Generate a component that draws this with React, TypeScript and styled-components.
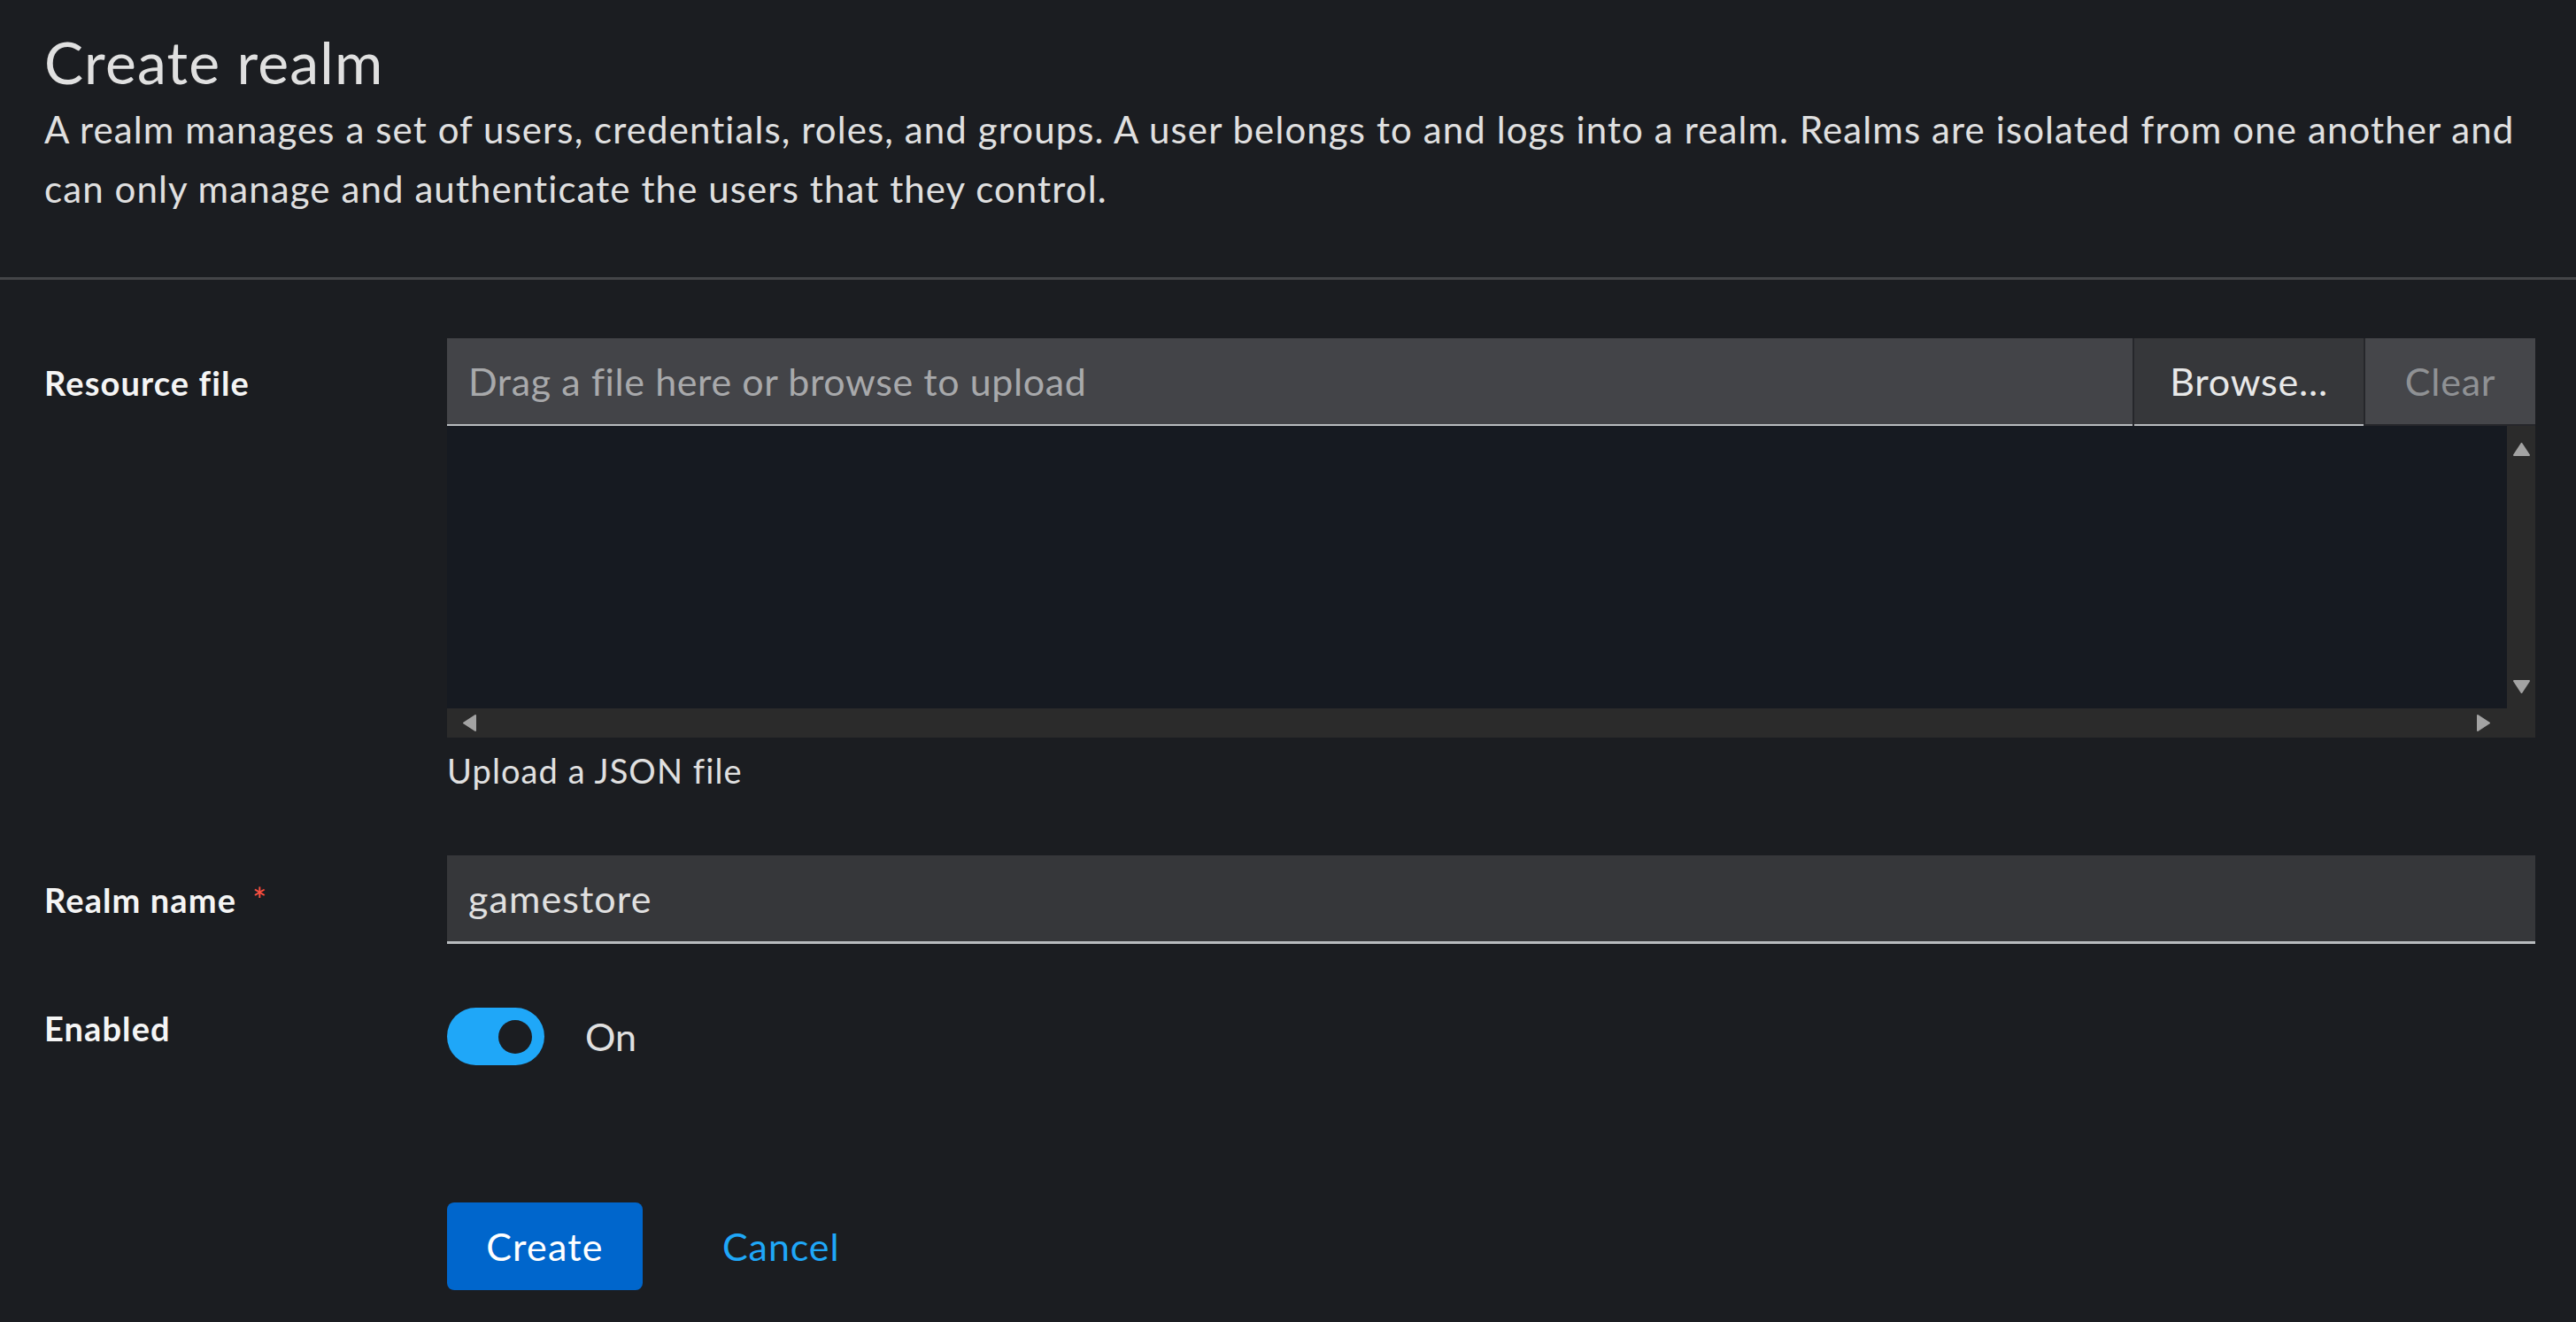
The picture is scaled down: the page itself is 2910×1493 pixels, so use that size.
import React from "react";
import styled, { createGlobalStyle } from "styled-components";

const GlobalStyle = createGlobalStyle`
  html, body, #root {
    margin: 0;
    padding: 0;
    min-height: 100%;
    background: #1b1d21;
  }
  body {
    font-family: "Lato", "Liberation Sans", sans-serif;
    color: #e0e0e0;
    letter-spacing: 1.1px;
  }
  * { box-sizing: border-box; }
`;

const Page = styled.main`
  min-height: 1493px;
  background: #1b1d21;
`;

const Header = styled.header`
  padding: 27px 46px 66px 50px;
  border-bottom: 3px solid #444548;
`;

const Title = styled.h1`
  margin: 0;
  font-size: 66px;
  line-height: 86px;
  font-weight: 400;
  color: #e0e0e0;
  letter-spacing: 1.2px;
`;

const Description = styled.p`
  margin: 0;
  font-size: 42px;
  line-height: 67px;
  color: #e0e0e0;
`;

const Form = styled.form`
  display: flex;
  flex-direction: column;
  gap: 67px;
  padding: 66px 46px 0 50px;
`;

const Row = styled.div<{ $extraTop?: number }>`
  display: grid;
  grid-template-columns: 455px 1fr;
  align-items: start;
  margin-top: ${(p) => p.$extraTop ?? 0}px;
`;

const Label = styled.label<{ $pad: number }>`
  padding-top: ${(p) => p.$pad}px;
  font-size: 38px;
  line-height: 57px;
  font-weight: 700;
  color: #f5f5f5;
  display: flex;
  align-items: flex-start;
`;

const Required = styled.span`
  color: #fe5142;
  margin-left: 18px;
  font-weight: 400;
`;

const Control = styled.div<{ $pad?: number }>`
  display: flex;
  flex-direction: column;
  padding-top: ${(p) => p.$pad ?? 0}px;
`;

const UploadBar = styled.div`
  display: flex;
  height: 99px;
  gap: 2px;
  background: #26272b;
`;

const FileName = styled.div`
  flex: 1;
  display: flex;
  align-items: center;
  padding: 0 24px;
  background: #434448;
  border-bottom: 2px solid #b8bbbe;
  font-size: 43px;
  color: #a8a9ab;
  letter-spacing: 0.6px;
`;

const BarButton = styled.button<{ $disabled?: boolean; $w: number }>`
  width: ${(p) => p.$w}px;
  border: none;
  border-bottom: 2px solid ${(p) => (p.$disabled ? "#26272b" : "#b8bbbe")};
  background: ${(p) => (p.$disabled ? "#45464a" : "#36373a")};
  color: ${(p) => (p.$disabled ? "#8f9194" : "#e8e8e8")};
  font-family: inherit;
  font-size: 43px;
  letter-spacing: 0.8px;
  padding: 0;
  cursor: pointer;
`;

const TextBox = styled.div`
  display: grid;
  grid-template-columns: 1fr 32px;
  grid-template-rows: 319px 33px;
  background: #2b2b2b;
`;

const TextArea = styled.div`
  background: #161a21;
`;

const VScroll = styled.div`
  display: flex;
  flex-direction: column;
  justify-content: space-between;
  align-items: center;
  padding: 19px 0 17px;
`;

const HScroll = styled.div`
  display: flex;
  justify-content: space-between;
  align-items: center;
  padding: 0 19px 0 18px;
`;

const Corner = styled.div`
  background: #2b2b2b;
`;

const Helper = styled.div`
  margin-top: 9px;
  font-size: 38px;
  line-height: 57px;
  color: #e0e0e0;
`;

const TextInput = styled.div`
  height: 100px;
  display: flex;
  align-items: center;
  padding: 0 24px;
  background: #36373a;
  border-bottom: 3px solid #b8bbbe;
  font-size: 43px;
  color: #e0e0e0;
`;

const SwitchRow = styled.div`
  display: flex;
  align-items: center;
  gap: 46px;
`;

const Track = styled.span`
  width: 110px;
  height: 65px;
  border-radius: 33px;
  background: #1fa7f8;
  display: flex;
  align-items: center;
  justify-content: flex-end;
  padding-right: 14px;
`;

const Knob = styled.span`
  width: 38px;
  height: 38px;
  border-radius: 50%;
  background: #1b1d21;
`;

const SwitchText = styled.span`
  font-size: 43px;
  line-height: 65px;
  color: #e0e0e0;
  letter-spacing: 0;
`;

const Actions = styled.div`
  display: flex;
  align-items: center;
`;

const PrimaryButton = styled.button`
  width: 221px;
  height: 99px;
  border: none;
  border-radius: 8px;
  background: #0066cc;
  color: #ffffff;
  font-family: inherit;
  font-size: 43px;
  letter-spacing: 1.2px;
  cursor: pointer;
`;

const LinkButton = styled.button`
  border: none;
  background: transparent;
  color: #1fa7f8;
  font-family: inherit;
  font-size: 43px;
  letter-spacing: 0.9px;
  padding: 0 46px 0 90px;
  height: 99px;
  cursor: pointer;
`;

const Arrow = ({ dir }: { dir: "up" | "down" | "left" | "right" }) => {
  const vertical = dir === "up" || dir === "down";
  const w = vertical ? 19 : 15;
  const h = vertical ? 15 : 19;
  const pts = {
    up: "9.5,1 18,14 1,14",
    down: "1,1 18,1 9.5,14",
    left: "14,1 14,18 1,9.5",
    right: "1,1 14,9.5 1,18",
  }[dir];
  return (
    <svg width={w} height={h} viewBox={`0 0 ${w} ${h}`}>
      <polygon points={pts} fill="#a3a3a3" strokeLinejoin="round" stroke="#a3a3a3" strokeWidth="2" />
    </svg>
  );
};

export default function App() {
  return (
    <Page>
      <GlobalStyle />
      <Header>
        <Title>Create realm</Title>
        <Description>
          A realm manages a set of users, credentials, roles, and groups. A user belongs to and logs into a realm. Realms are isolated from one another and can only manage and authenticate the users that they control.
        </Description>
      </Header>
      <Form onSubmit={(e) => e.preventDefault()}>
        <Row>
          <Label $pad={22}>Resource file</Label>
          <Control>
            <UploadBar>
              <FileName>Drag a file here or browse to upload</FileName>
              <BarButton type="button" $w={259}>Browse...</BarButton>
              <BarButton type="button" $w={192} $disabled>Clear</BarButton>
            </UploadBar>
            <TextBox>
              <TextArea />
              <VScroll>
                <Arrow dir="up" />
                <Arrow dir="down" />
              </VScroll>
              <HScroll>
                <Arrow dir="left" />
                <Arrow dir="right" />
              </HScroll>
              <Corner />
            </TextBox>
            <Helper>Upload a JSON file</Helper>
          </Control>
        </Row>
        <Row>
          <Label $pad={22}>
            Realm name<Required>*</Required>
          </Label>
          <Control>
            <TextInput>gamestore</TextInput>
          </Control>
        </Row>
        <Row>
          <Label $pad={0}>Enabled</Label>
          <Control $pad={5}>
            <SwitchRow>
              <Track>
                <Knob />
              </Track>
              <SwitchText>On</SwitchText>
            </SwitchRow>
          </Control>
        </Row>
        <Row $extraTop={88}>
          <span />
          <Actions>
            <PrimaryButton type="submit">Create</PrimaryButton>
            <LinkButton type="button">Cancel</LinkButton>
          </Actions>
        </Row>
      </Form>
    </Page>
  );
}
